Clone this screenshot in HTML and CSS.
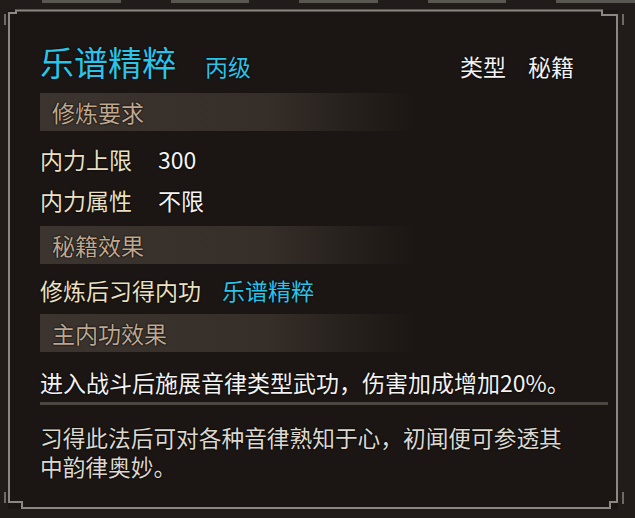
FILE: index.html
```html
<!DOCTYPE html>
<html lang="zh-CN">
<head>
    <meta charset="UTF-8">
    <meta name="viewport" content="width=device-width, initial-scale=1.0">
    <title>乐谱精粹</title>
    <link rel="stylesheet" href="styles.css">
</head>
<body>

<!-- 背景上方的其他面板边缘 -->
<div class="back-strip">
    <span></span><span></span><span></span><span></span><span></span>
</div>

<div class="panel">
    <div class="title-row">
        <span class="book-name">乐谱精粹</span>
        <span class="grade">丙级</span>
        <span class="type">类型<span class="type-value">秘籍</span></span>
    </div>

    <div class="section-bar">修炼要求</div>
    <div class="info-row">
        <span class="label">内力上限</span>
        <span class="value">300</span>
    </div>
    <div class="info-row second">
        <span class="label">内力属性</span>
        <span class="value">不限</span>
    </div>

    <div class="section-bar bar-two">秘籍效果</div>
    <div class="info-row third">
        <span class="label">修炼后习得内功</span>
        <span class="value cyan">乐谱精粹</span>
    </div>

    <div class="section-bar bar-three">主内功效果</div>
    <p class="effect">进入战斗后施展音律类型武功，伤害加成增加20%。</p>

    <div class="divider"></div>

    <p class="desc">习得此法后可对各种音律熟知于心，初闻便可参透其<br>中韵律奥妙。</p>
</div>

<!-- 外框 -->
<svg class="frame" width="635" height="518" viewBox="0 0 635 518">
    <path d="M9 503 V13 H16 V10.5 H602 V15 H617 V502 H610 V508 H22 V502 H9"
          fill="none" stroke="#8c8781" stroke-width="2"/>
    <rect x="4" y="14" width="2" height="11" fill="#6f6a64"/>
    <rect x="4" y="492" width="2" height="11" fill="#6f6a64"/>
    <rect x="622" y="14" width="2" height="11" fill="#6f6a64"/>
    <rect x="622" y="492" width="2" height="12" fill="#6f6a64"/>
</svg>

</body>
</html>
```

FILE: styles.css
```css
body {
    margin: 0;
    padding: 0;
    width: 635px;
    height: 518px;
    overflow: hidden;
    position: relative;
    background-color: #211c19;
    font-family: "Noto Sans CJK SC", "Noto Sans", sans-serif;
}

.back-strip {
    display: flex;
    gap: 50px;
    height: 3px;
    padding-left: 42px;
}

.back-strip span {
    width: 88px;
    background-color: #5a5651;
}

.panel {
    margin: 7px 0 0 8px;
    width: 610px;
    height: 499px;
    box-sizing: border-box;
    padding: 29px 44px 0 32px;
    background-color: #1b1613;
    text-shadow: 0 0 2px #000, 0 0 1px #000;
}

.title-row {
    display: flex;
    align-items: baseline;
    height: 46px;
    line-height: 46px;
}

.book-name {
    font-size: 34px;
    color: #2cc3e9;
}

.grade {
    margin-left: 29px;
    font-size: 23px;
    color: #2cc3e9;
}

.type {
    margin-left: auto;
    font-size: 23px;
    color: #f2f2f2;
}

.type-value {
    margin-left: 22px;
}

.section-bar {
    margin-top: 8px;
    width: 376px;
    height: 38px;
    line-height: 38px;
    padding-left: 12px;
    box-sizing: border-box;
    font-size: 23px;
    color: #bfa78f;
    background: linear-gradient(to right, #3b342f 0%, #352e29 60%, rgba(53, 46, 41, 0) 100%);
}

.bar-two {
    margin-top: 6px;
}

.bar-three {
    margin-top: 4px;
}

.info-row {
    display: flex;
    margin-top: 8px;
    height: 40px;
    line-height: 40px;
    font-size: 23px;
}

.info-row.second {
    margin-top: 1px;
}

.info-row.third {
    margin-top: 6px;
}

.label {
    color: #ebe0c3;
    width: 118px;
}

.info-row.third .label {
    width: 182px;
}

.value {
    color: #f4f4f4;
}

.value.cyan {
    color: #2cc3e9;
}

.effect {
    margin: 12px 0 0;
    height: 36px;
    line-height: 36px;
    font-size: 23px;
    color: #f2f2f2;
    white-space: nowrap;
}

.divider {
    margin-top: 2px;
    height: 3px;
    width: 568px;
    background-color: #4d4741;
}

.desc {
    margin: 18px 0 0;
    line-height: 29px;
    font-size: 22.7px;
    color: #dcd8d0;
}

.frame {
    position: absolute;
    top: 0;
    left: 0;
    pointer-events: none;
}
```
